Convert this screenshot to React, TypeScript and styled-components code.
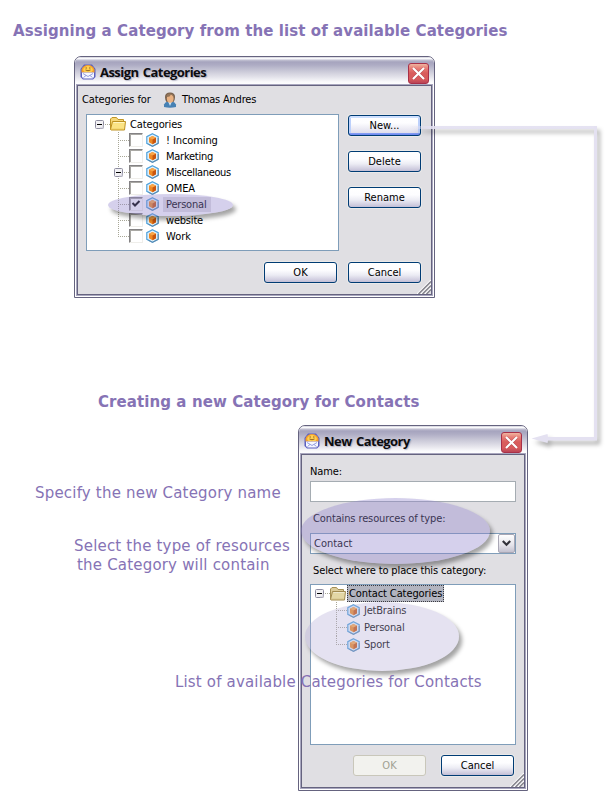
import React from 'react';
import styled, { createGlobalStyle, css } from 'styled-components';

const GlobalStyle = createGlobalStyle`
  * { box-sizing: border-box; }
  body { margin: 0; background: #fff; }
  button { font: inherit; }
`;

const UI_FONT = '"DejaVu Sans Condensed", "DejaVu Sans", sans-serif';

/* ---------- page ---------- */

const Page = styled.main`
  position: relative;
  width: 610px;
  height: 800px;
  overflow: hidden;
  background: #fff;
  color: #000;
  font: 11px/14px ${UI_FONT};
`;

const Heading = styled.h2<{ $indent: number }>`
  margin: 0 0 0 ${p => p.$indent}px;
  color: #8673b5;
  font: bold 15px/20px "DejaVu Sans", sans-serif;
  letter-spacing: 0.08px;
  white-space: nowrap;
`;

const AssignSection = styled.section`
  padding-top: 21px;
  height: 392px;
`;

const CreateSection = styled.section`
  display: grid;
  grid-template-columns: 298px 230px;
  grid-template-rows: 33px auto;
`;

const SpanHeading = styled(Heading)`
  grid-column: 1 / -1;
`;

const Notes = styled.div`
  padding-top: 59px;
`;

const Note = styled.p<{ $indent: number; $gap?: number }>`
  margin: ${p => p.$gap ?? 0}px 0 0 ${p => p.$indent}px;
  color: #8673b5;
  font: 15px/19px "DejaVu Sans", sans-serif;
  letter-spacing: 0.19px;
  white-space: nowrap;
`;

const FloatingNote = styled(Note)`
  position: absolute;
  left: 175px;
  top: 673px;
  margin: 0;
  letter-spacing: 0.17px;
`;

/* ---------- window ---------- */

const Frame = styled.div<{ $w: number; $h: number }>`
  display: flex;
  flex-direction: column;
  width: ${p => p.$w}px;
  height: ${p => p.$h}px;
  padding: 0 2px 2px;
  border: 1px solid #65637f;
  border-radius: 7px 7px 0 0;
  background: #fff;
  overflow: hidden;
`;

const AssignFrame = styled(Frame)`
  margin: 15px 0 0 74px;
`;

const TitleBar = styled.header`
  display: flex;
  align-items: center;
  position: relative;
  flex: none;
  height: 28px;
  margin: 0 -2px;
  padding: 2px 5px 0;
  border-radius: 6px 6px 0 0;
  background: linear-gradient(
    #bdbccd 0, #fff 1px, #f4f4f8 2px, #c3c2d3 3px, #a6a4be 5px, #aeacc4 8px,
    #c9c8d7 14px, #e3e2ea 20px, #fafafc 25px, #fff 28px
  );
`;

const TitleText = styled.h1`
  flex: 1;
  margin: 0 0 0 4px;
  font: bold 13px/18px "Open Sans", "Noto Sans", sans-serif;
  letter-spacing: -0.55px;
  word-spacing: 1.5px;
  color: #0c0c10;
  text-shadow: 1px 1px 1px rgba(90, 88, 120, 0.35);
  white-space: nowrap;
`;

const CloseButton = styled.button`
  display: grid;
  place-items: center;
  width: 21px;
  height: 21px;
  margin: 2px 0 0;
  padding: 0;
  border: 1px solid #a83048;
  border-radius: 3px;
  background: linear-gradient(#efb5a0 0, #e88078 4px, #d95c5c 9px, #d85a5c 15px, #b94456 19px);
`;

const Client = styled.div`
  display: flex;
  flex-direction: column;
  position: relative;
  flex: 1;
  border: 1px solid #65637f;
  box-shadow: 0 0 0 1px #a9a7bf;
  background: #e0dfe3;
`;

const GripSvg = styled.svg`
  position: absolute;
  right: 0;
  bottom: 0;
`;

/* ---------- controls ---------- */

const PushButton = styled.button<{ $default?: boolean }>`
  width: 73px;
  height: 21px;
  padding: 1px 0 0;
  border: 1px solid #003c74;
  border-radius: 3px;
  background: linear-gradient(#fff 0, #fdfdff 7px, #ececf4 12px, #cfccdf 17px, #c2bed5 19px);
  color: #000;
  line-height: 18px;
  box-shadow: 0 0 0 1px rgba(240, 240, 236, 0.6);
  ${p => p.$default && css`
    background:
      linear-gradient(#cee0ff, #cee0ff) 0 0 / 100% 2px no-repeat,
      linear-gradient(#8aa4f4, #6982ee) 0 100% / 100% 2px no-repeat,
      linear-gradient(90deg, #bcd0fb 2px, transparent 2px, transparent 69px, #bcd0fb 69px),
      linear-gradient(#fff, #fdfdff 7px, #dcdaea 18px);
  `}
  &:disabled {
    border-color: #c9c7ba;
    background: #f2f2ee;
    color: #a1a192;
    box-shadow: none;
  }
`;

const AssignBody = styled.div`
  display: grid;
  grid-template-columns: 253px 73px;
  column-gap: 9px;
  padding-left: 8px;
`;

const Owner = styled.div`
  display: flex;
  align-items: center;
  height: 28px;
  padding: 0 0 1px 4px;
`;

const OwnerLabel = styled.span`
  width: 81px;
  letter-spacing: -0.1px;
`;

const OwnerName = styled.span`
  margin-left: 5px;
  letter-spacing: -0.2px;
`;

const SideButtons = styled.div`
  display: flex;
  flex-direction: column;
  gap: 15px;
  padding-top: 1px;
`;

const DialogButtons = styled.div<{ $top: number; $right: number; $gap: number }>`
  display: flex;
  justify-content: flex-end;
  gap: ${p => p.$gap}px;
  padding: ${p => p.$top}px ${p => p.$right}px 0 0;
`;

/* ---------- tree ---------- */

const Tree = styled.ul<{ $h: number; $top: number; $left: number }>`
  height: ${p => p.$h}px;
  margin: 0;
  padding: ${p => p.$top}px 0 0 ${p => p.$left}px;
  border: 1px solid #7f9db9;
  background: #fff;
  list-style: none;
`;

const TreeRow = styled.li<{ $h: number; $indent?: number }>`
  display: flex;
  align-items: center;
  height: ${p => p.$h}px;
  padding-left: ${p => p.$indent ?? 0}px;
`;

const Link = styled.span`
  width: 6px;
  height: 1px;
  background: repeating-linear-gradient(90deg, transparent 0 1px, #a8a797 1px 2px);
`;

const Guide = styled.span<{ $last?: boolean; $w: number }>`
  position: relative;
  width: ${p => p.$w}px;
  height: 100%;
  background:
    repeating-linear-gradient(#a8a797 0 1px, transparent 1px 2px) 0 0 / 1px ${p => (p.$last ? '50%' : '100%')} no-repeat,
    repeating-linear-gradient(90deg, #a8a797 0 1px, transparent 1px 2px) 0 50% / 100% 1px no-repeat;
`;

const ExpanderSvg = styled.svg<{ $over?: boolean }>`
  flex: none;
  ${p => p.$over && css`
    position: absolute;
    left: -4px;
    top: 4px;
  `}
`;

const FolderSvg = styled.svg<{ $muted?: boolean }>`
  flex: none;
  ${p => p.$muted && css`filter: saturate(0.55) brightness(0.95);`}
`;

const CheckBox = styled.span`
  display: grid;
  place-items: center;
  width: 14px;
  height: 14px;
  margin-right: 3px;
  border: 1px solid;
  border-color: #848284 #efeeea #efeeea #848284;
  box-shadow: inset 1px 1px 0 #a9a8a4;
  background: #fff;
`;

const Label = styled.span<{ $picked?: boolean; $ls?: number; $gap?: number }>`
  margin-left: ${p => p.$gap ?? 4}px;
  padding: 1px 3px 0;
  letter-spacing: ${p => p.$ls ?? -0.2}px;
  white-space: nowrap;
  ${p => p.$picked && css`
    padding-right: 5px;
    background: #e0dfe3;
  `}
`;

const FocusLabel = styled.span`
  height: 17px;
  margin-left: 1px;
  padding: 1px 1px 0;
  border: 1px dotted #3a3a40;
  background: #b2b4bf;
  line-height: 14px;
  letter-spacing: -0.1px;
  white-space: nowrap;
`;

/* ---------- new category form ---------- */

const Form = styled.div`
  display: flex;
  flex-direction: column;
  padding: 10px 8px 0;
`;

const FieldLabel = styled.label<{ $indent?: number; $gap?: number; $after: number }>`
  margin: ${p => p.$gap ?? 0}px 0 ${p => p.$after}px ${p => p.$indent ?? 0}px;
  letter-spacing: -0.12px;
  white-space: nowrap;
`;

const TextField = styled.input`
  width: 206px;
  height: 21px;
  border: 1px solid #a5acb2;
  background: #fff;
`;

const Combo = styled.div`
  display: flex;
  align-items: center;
  justify-content: space-between;
  height: 21px;
  padding: 0 0 0 3px;
  border: 1px solid #7f9db9;
  background: #fff;
`;

const ComboValue = styled.span`
  padding-top: 1px;
`;

const ComboArrow = styled.span`
  display: grid;
  place-items: center;
  width: 17px;
  height: 19px;
  border: 1px solid #a9a7b5;
  border-radius: 2px;
  background: linear-gradient(#fff, #e4e3ea 60%, #c3c1cf);
`;

/* ---------- callouts ---------- */

const Spot = styled.div<{ $x: number; $y: number; $w: number; $h: number; $tint: string }>`
  position: absolute;
  left: ${p => p.$x}px;
  top: ${p => p.$y}px;
  width: ${p => p.$w}px;
  height: ${p => p.$h}px;
  border-radius: 50%;
  background: ${p => p.$tint};
  box-shadow: 3px 4px 4px rgba(0, 0, 0, 0.36);
  pointer-events: none;
`;

const ConnectorSvg = styled.svg`
  position: absolute;
  left: 400px;
  top: 110px;
  filter: drop-shadow(3px 4px 2px rgba(0, 0, 0, 0.32));
`;

/* ---------- drawings ---------- */

const AppIcon = () => (
  <svg width="16" height="16" viewBox="0 0 16 16">
    <path d="M4 .5h8L15.500 5v8L13 15.500H3L.5 13V5z" fill="#5a5fc0" />
    <path d="M1.500 8.500V5.500Q3 1 8 1t6.500 4.500v3z" fill="#f5a02a" />
    <path d="M3 6Q4.500 2 8 2t5 4l-1.500 2h-7z" fill="#ffd050" />
    <path d="M5.500 4h1.500M9 4h1.500M5.500 6q2.500 1.500 5 0" stroke="#8a5a20" fill="none" strokeWidth=".9" />
    <path d="M2 8.500h12v4.500l-1.500 1.500h-9L2 13z" fill="#f6f7ff" />
    <path d="M3 9.500 8 12.500l5-3M3.500 13.500l2.500-2M12.500 13.500l-2.500-2" stroke="#8a94dc" fill="none" strokeWidth=".9" />
  </svg>
);

const PersonIcon = () => (
  <svg width="14" height="16" viewBox="0 0 14 16">
    <path d="M1 15V12.500Q2 10 5 9.500h4q3 .5 4 3V15q-6 1.500-12 0z" fill="#4681b4" />
    <path d="M5 9.500h4L7 14z" fill="#cfe2f2" />
    <path d="M2 5Q2 .5 7 .5T12 5q0 3-1.500 5H3.500Q2 8 2 5z" fill="#77604c" />
    <ellipse cx="7.200" cy="6.500" rx="3.400" ry="4.200" fill="#e9b283" />
    <path d="M4 5Q7 5 8 2.500q2 1 2.500 3V3Q9 1 6 1.500T3.500 5z" fill="#94765a" />
  </svg>
);

const FolderIcon = ({ muted }: { muted?: boolean }) => (
  <FolderSvg $muted={muted} width="16" height="14" viewBox="0 0 16 14">
    <path d="M.5 12.500V2L2 .5h4.500L8 2.500h5.500V5" fill="#f6d777" stroke="#c09628" />
    <path d="M.5 12.500 2.500 4.500h13l-1 8.500H1z" fill="#fbe384" stroke="#bd9122" />
    <path d="M3.500 5.500h10.900" stroke="#fff6c4" />
    <path d="M1.500 12.300h12" stroke="#dfb94c" />
  </FolderSvg>
);

const CubeIcon = () => (
  <svg width="13" height="14" viewBox="0 0 13 14">
    <path d="M6.500.7 12.200 3.700v6.600l-5.700 3-5.700-3V3.700z" fill="#dff1fc" stroke="#4fa2dc" strokeWidth="1.200" />
    <path d="M12.200 5v5.300l-5.700 3-4-2" fill="none" stroke="#62809c" strokeWidth=".8" />
    <path d="M6.500 3 10 4.700v4.600L6.500 11.200 3 9.300V4.700z" fill="#ef8a24" />
    <path d="M6.500 3 10 4.700 6.500 6.500 3 4.700z" fill="#f9a64a" />
    <path d="M6.500 6.500 10 4.700v4.600l-3.500 1.900z" fill="#c9560f" />
  </svg>
);

const Expander = ({ over }: { over?: boolean }) => (
  <ExpanderSvg $over={over} width="9" height="9" viewBox="0 0 9 9">
    <rect x=".5" y=".5" width="8" height="8" rx="1" fill="#f2f1f4" stroke="#8e8da0" />
    <path d="M5 8h3V5" fill="none" stroke="#cccbd6" />
    <path d="M2 4.500h5" stroke="#000" />
  </ExpanderSvg>
);

const Grip = () => (
  <GripSvg width="14" height="14" viewBox="0 0 14 14">
    <path d="M0 14 14 0M4 14 14 4M8 14l6-6" stroke="#fff" strokeWidth="1.200" />
    <path d="M1.500 14 14 1.500M5.500 14 14 5.500M9.500 14l4.500-4.500" stroke="#85848c" strokeWidth="1.500" />
  </GripSvg>
);

const Cross = () => (
  <svg width="13" height="13" viewBox="0 0 13 13">
    <path d="M1.200 1.200 11.800 11.800M11.800 1.200 1.200 11.800" stroke="#7c2030" strokeWidth="3" opacity=".45" />
    <path d="M1 1 12 12M12 1 1 12" stroke="#fff" strokeWidth="2.200" />
  </svg>
);

const Tick = () => (
  <svg width="10" height="10" viewBox="0 0 10 10">
    <path d="M1.500 4 4 6.500 8.500 2" fill="none" stroke="#000" strokeWidth="2" />
  </svg>
);

const Chevron = () => (
  <svg width="9" height="7" viewBox="0 0 9 7">
    <path d="M.8 1 4.500 4.700 8.200 1" fill="none" stroke="#33333b" strokeWidth="2.200" />
  </svg>
);

const Connector = () => (
  <ConnectorSvg width="210" height="350" viewBox="0 0 210 350">
    <defs>
      <linearGradient id="lead" x1="10" x2="30" y1="0" y2="0" gradientUnits="userSpaceOnUse">
        <stop offset="0" stopColor="#e3e0f1" stopOpacity="0" />
        <stop offset="1" stopColor="#e3e0f1" stopOpacity=".9" />
      </linearGradient>
    </defs>
    <path d="M10 16h184v3H10z" fill="url(#lead)" />
    <path d="M194 16h3v314.500h-49l-.5 2.500-16-4.500 16-4.500 .5 3h46z" fill="#e4e1f1" />
  </ConnectorSvg>
);

/* ---------- content ---------- */

type Category = { name: string; ls: number; checked?: boolean; expandable?: boolean };

const categories: Category[] = [
  { name: '! Incoming', ls: -0.1 },
  { name: 'Marketing', ls: -0.25 },
  { name: 'Miscellaneous', ls: -0.35 },
  { name: 'OMEA', ls: -0.1 },
  { name: 'Personal', ls: -0.2 , checked: true },
  { name: 'website', ls: -0.2 },
  { name: 'Work', ls: 0 },
].map(c => ({ ...c, expandable: c.name === 'Miscellaneous' }));

const contactCategories = ['JetBrains', 'Personal', 'Sport'];

type WindowProps = { title: string; w: number; h: number; frame?: typeof Frame; children: React.ReactNode };

const Window = ({ title, w, h, frame: Shell = Frame, children }: WindowProps) => (
  <Shell $w={w} $h={h}>
    <TitleBar>
      <AppIcon />
      <TitleText>{title}</TitleText>
      <CloseButton aria-label="Close"><Cross /></CloseButton>
    </TitleBar>
    <Client>
      {children}
      <Grip />
    </Client>
  </Shell>
);

const AssignWindow = () => (
  <Window title="Assign Categories" w={361} h={242} frame={AssignFrame as typeof Frame}>
    <Owner>
      <OwnerLabel>Categories for</OwnerLabel>
      <PersonIcon />
      <OwnerName>Thomas Andres</OwnerName>
    </Owner>
    <AssignBody>
      <Tree $h={137} $top={1} $left={8}>
        <TreeRow $h={16}>
          <Expander />
          <Link />
          <FolderIcon />
          <Label $ls={-0.12} $gap={1}>Categories</Label>
        </TreeRow>
        {categories.map((c, i) => (
          <TreeRow key={c.name} $h={16} $indent={23}>
            <Guide $w={11} $last={i === categories.length - 1}>
              {c.expandable && <Expander over />}
            </Guide>
            <CheckBox>{c.checked && <Tick />}</CheckBox>
            <CubeIcon />
            <Label $ls={c.ls} $picked={c.checked}>{c.name}</Label>
          </TreeRow>
        ))}
      </Tree>
      <SideButtons>
        <PushButton $default>New...</PushButton>
        <PushButton>Delete</PushButton>
        <PushButton>Rename</PushButton>
      </SideButtons>
    </AssignBody>
    <DialogButtons $top={11} $right={10} $gap={11}>
      <PushButton>OK</PushButton>
      <PushButton>Cancel</PushButton>
    </DialogButtons>
  </Window>
);

const NewCategoryWindow = () => (
  <Window title="New Category" w={230} h={366}>
    <Form>
      <FieldLabel $after={2}>Name:</FieldLabel>
      <TextField aria-label="Name" />
      <FieldLabel $indent={3} $gap={10} $after={7}>Contains resources of type:</FieldLabel>
      <Combo>
        <ComboValue>Contact</ComboValue>
        <ComboArrow><Chevron /></ComboArrow>
      </Combo>
      <FieldLabel $indent={3} $gap={10} $after={6}>Select where to place this category:</FieldLabel>
      <Tree $h={161} $top={0} $left={4}>
        <TreeRow $h={17}>
          <Expander />
          <Link />
          <FolderIcon muted />
          <FocusLabel>Contact Categories</FocusLabel>
        </TreeRow>
        {contactCategories.map((name, i) => (
          <TreeRow key={name} $h={17} $indent={21}>
            <Guide $w={11} $last={i === contactCategories.length - 1} />
            <CubeIcon />
            <Label $gap={1}>{name}</Label>
          </TreeRow>
        ))}
      </Tree>
    </Form>
    <DialogButtons $top={10} $right={10} $gap={15}>
      <PushButton disabled>OK</PushButton>
      <PushButton>Cancel</PushButton>
    </DialogButtons>
  </Window>
);

export default function App() {
  return (
    <Page>
      <GlobalStyle />
      <AssignSection>
        <Heading $indent={13}>Assigning a Category from the list of available Categories</Heading>
        <AssignWindow />
      </AssignSection>
      <CreateSection>
        <SpanHeading $indent={98}>Creating a new Category for Contacts</SpanHeading>
        <Notes>
          <Note $indent={35}>Specify the new Category name</Note>
          <Note $indent={74} $gap={34}>Select the type of resources</Note>
          <Note $indent={77}>the Category will contain</Note>
        </Notes>
        <NewCategoryWindow />
      </CreateSection>
      <Spot $x={108} $y={194} $w={125} $h={22} $tint="rgba(144, 131, 205, 0.38)" />
      <Spot $x={301} $y={498} $w={189} $h={66} $tint="rgba(144, 131, 205, 0.38)" />
      <Spot $x={305} $y={602} $w={154} $h={69} $tint="rgba(181, 172, 215, 0.35)" />
      <Connector />
      <FloatingNote $indent={0}>List of available Categories for Contacts</FloatingNote>
    </Page>
  );
}
